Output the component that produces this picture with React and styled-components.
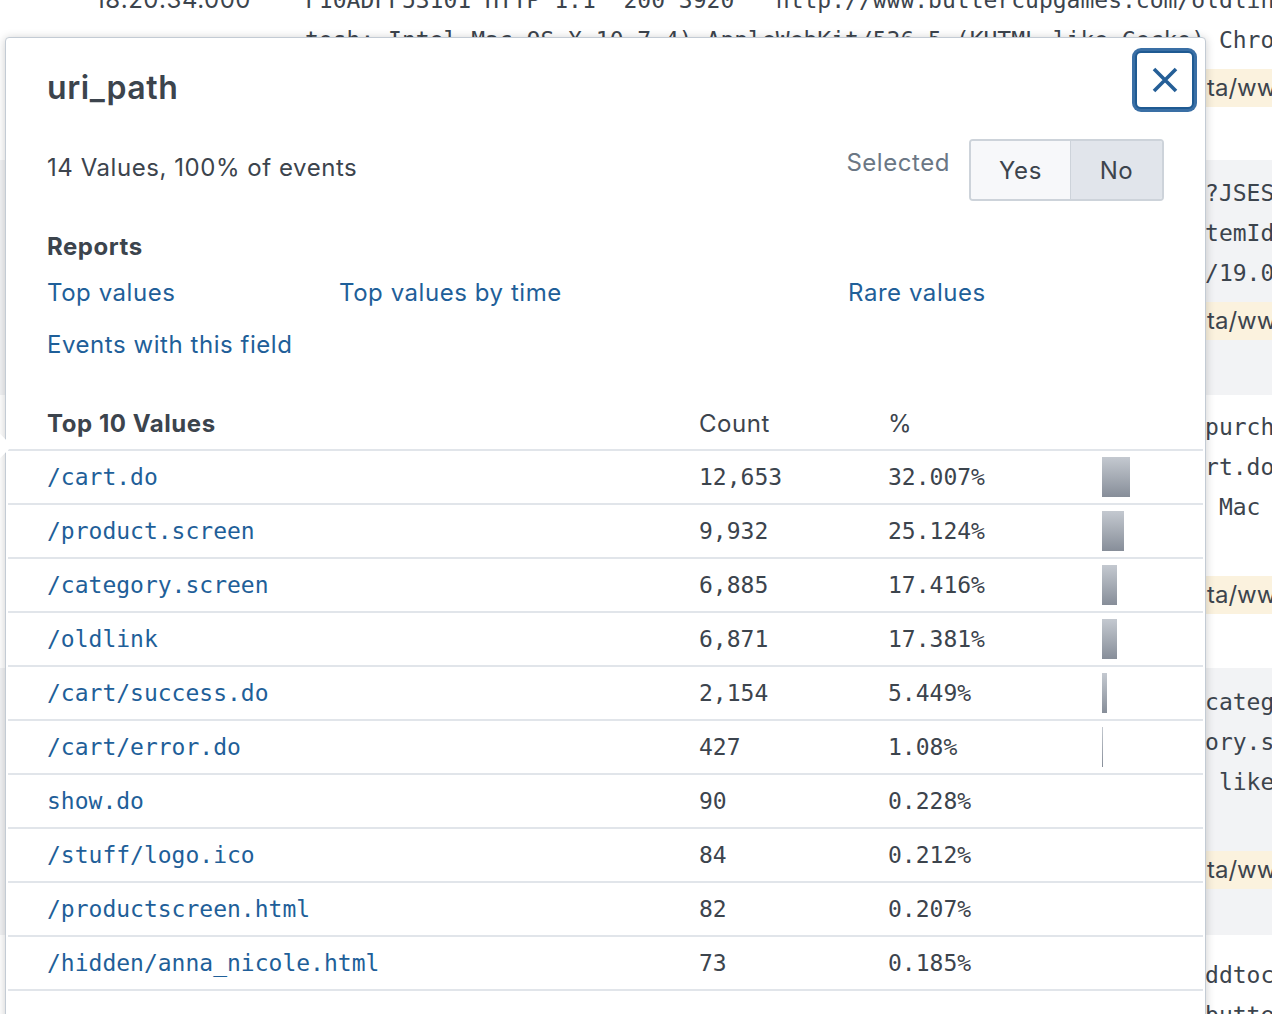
import React from 'react';
import styled, { createGlobalStyle } from 'styled-components';

const GlobalStyle = createGlobalStyle`
  *, *::before, *::after { box-sizing: border-box; }
  html, body { margin: 0; padding: 0; background: #ffffff; }
  body {
    font-family: Inter, Lato, "Open Sans", sans-serif;
    letter-spacing: 0.55px;
    color: #3c444d;
    overflow: hidden;
  }
`;

const fit = (head, tail, col = 65) => head.padEnd(col, ' ').slice(0, col) + tail;

const events = [
  {
    shaded: false, top: 13, bottom: 53, date: '9/14/18', time: '18:20:34.000',
    lines: [
      '91.214.92.22 - - [14/Sep/2018:18:20:34] "GET /oldlink?itemId=EST-18&JSESSIONID=SD5SL1FF',
      'F10ADFF53101 HTTP 1.1" 200 3920  "http://www.buttercupgames.com/oldlink?itemId=EST-18"',
      'tosh; Intel Mac OS X 10_7_4) AppleWebKit/536.5 (KHTML,like Gecko) Chrome/19.0.1084.46 Safari/536.5" 512',
    ],
  },
  {
    shaded: true, top: 13, bottom: 55, date: '9/14/18', time: '18:20:31.000',
    lines: [
      fit('91.205.189.15 - - [14/Sep/2018:18:20:31] "GET /oldlink?itemId=EST-14', '?JSESSIONID=SD6SL8FF10ADFF53101 HTTP 1.1"'),
      fit('200 1423 "http://www.buttercupgames.com/cart.do?action=addtocart&i', 'temId=EST-14" "Mozilla/5.0'),
      fit('(Windows NT 6.1; WOW64) AppleWebKit/536.5 (KHTML, like Gecko) Chrome', '/19.0.1084.46 Safari/536.5" 468'),
    ],
  },
  {
    shaded: false, top: 12, bottom: 54, date: '9/14/18', time: '18:20:28.000',
    lines: [
      fit('182.236.164.11 - - [14/Sep/2018:18:20:28] "POST /cart.do?action=', 'purchase&itemId=EST-15&JSESSIONID='),
      fit('SD9SL3FF2ADFF53102 HTTP 1.1" 200 2334 "http://www.buttercupgames.com/ca', 'rt.do?action=addtocart&itemId=EST-15"'),
      fit('"Mozilla/5.0 (Macintosh; Intel Mac OS X 10_7_4) AppleWebKit/536.5 Intel', ' Mac OS X 10_7_4)'),
      'Safari/536.5" 546',
    ],
  },
  {
    shaded: true, top: 14, bottom: 46, date: '9/14/18', time: '18:20:25.000',
    lines: [
      fit('27.175.11.11 - - [14/Sep/2018:18:20:25] "GET /category.screen?', 'categoryId=TEE&JSESSIONID=SD2SL7FF'),
      fit('HTTP 1.1" 200 2871 "http://www.buttercupgames.com/categ', 'ory.screen?categoryId=TEE"'),
      fit('"Mozilla/5.0 (Windows NT 6.1) AppleWebKit/536.5 (KHTML,', ' like Gecko) Chrome/19.0'),
      'Safari/536.5" 322',
    ],
  },
  {
    shaded: false, top: 20, bottom: 40, date: '9/14/18', time: '18:20:22.000',
    lines: [
      fit('211.166.11.101 - - [14/Sep/2018:18:20:22] "POST /cart.do?action=a', 'ddtocart&itemId=EST-7'),
      fit('&JSESSIONID=SD4SL10FF9ADFF53103 HTTP 1.1" 200 1128 "http://www.', 'buttercupgames.com/product.screen'),
    ],
  },
];

const topValues = [
  { value: '/cart.do', count: '12,653', pct: 32.007, label: '32.007%' },
  { value: '/product.screen', count: '9,932', pct: 25.124, label: '25.124%' },
  { value: '/category.screen', count: '6,885', pct: 17.416, label: '17.416%' },
  { value: '/oldlink', count: '6,871', pct: 17.381, label: '17.381%' },
  { value: '/cart/success.do', count: '2,154', pct: 5.449, label: '5.449%' },
  { value: '/cart/error.do', count: '427', pct: 1.08, label: '1.08%' },
  { value: 'show.do', count: '90', pct: 0.228, label: '0.228%' },
  { value: '/stuff/logo.ico', count: '84', pct: 0.212, label: '0.212%' },
  { value: '/productscreen.html', count: '82', pct: 0.207, label: '0.207%' },
  { value: '/hidden/anna_nicole.html', count: '73', pct: 0.185, label: '0.185%' },
];

const Page = styled.div`
  position: relative;
  width: 1272px;
  height: 1014px;
  overflow: hidden;
`;

const EventList = styled.div`
  margin-top: -73px;
`;

const EventRow = styled.div`
  display: grid;
  grid-template-columns: 305px 1fr;
  padding: ${(p) => p.$top}px 0 ${(p) => p.$bottom}px;
  background: ${(p) => (p.$shaded ? '#f2f3f5' : '#ffffff')};
`;

const TimeCell = styled.div`
  padding-left: 95px;
  font-size: 24px;
  line-height: 40px;
  color: #3c444d;
`;

const RawCell = styled.div`
  min-width: 0;
  overflow: hidden;
`;

const RawLine = styled.div`
  font-family: "DejaVu Sans Mono", "Liberation Mono", monospace;
  font-size: 23px;
  letter-spacing: 0;
  line-height: 40px;
  height: 40px;
  white-space: pre;
  color: #3c444d;
`;

const FieldLine = styled.div`
  margin-top: 9px;
  height: 38px;
  white-space: nowrap;
  overflow: hidden;
  background: #fbf2de;
  font-size: 24px;
  letter-spacing: 0;
  line-height: 38px;
  color: #3c444d;
`;

const FieldHead = styled.span`
  display: inline-block;
  vertical-align: top;
  width: 902px;
  overflow: hidden;
`;

const Popover = styled.div`
  position: absolute;
  left: 5px;
  top: 37px;
  width: 1201px;
  height: 1020px;
  background: #ffffff;
  border: 1px solid #c3cbd4;
  border-radius: 4px;
  box-shadow: 0 1px 10px rgba(0, 0, 0, 0.2);
`;

const Arrow = styled.div`
  position: absolute;
  left: -18px;
  top: 398px;
  width: 20px;
  height: 20px;
  background: #ffffff;
  border-left: 1px solid #c3cbd4;
  border-bottom: 1px solid #c3cbd4;
  transform: rotate(45deg);
`;

const CloseButton = styled.button`
  position: absolute;
  top: 13px;
  right: 11px;
  width: 59px;
  height: 58px;
  padding: 0;
  display: flex;
  align-items: center;
  justify-content: center;
  background: #ffffff;
  border: 2px solid #1f5a92;
  border-radius: 6px;
  box-shadow: 0 0 0 3px #3a6fa5;
  cursor: pointer;
`;

const Section = styled.div`
  padding: 0 41px;
`;

const Title = styled.h2`
  margin: 0;
  padding-top: 30px;
  font-size: 32px;
  line-height: 40px;
  font-weight: 600;
  letter-spacing: 0.6px;
  color: #3c444d;
`;

const SummaryRow = styled.div`
  margin-top: 31px;
  display: flex;
  align-items: center;
  justify-content: space-between;
`;

const Summary = styled.div`
  font-size: 24px;
  padding-bottom: 6px;
`;

const SelectGroup = styled.div`
  display: flex;
  align-items: center;
  gap: 19px;
`;

const SelectLabel = styled.span`
  font-size: 24px;
  color: #6b7785;
  padding-bottom: 16px;
`;

const Toggle = styled.div`
  display: flex;
  height: 62px;
  border: 2px solid #cdd3da;
  border-radius: 4px;
  overflow: hidden;
`;

const ToggleButton = styled.button`
  width: ${(p) => p.$width}px;
  border: none;
  border-left: ${(p) => (p.$first ? 'none' : '1px solid #cdd3da')};
  background: ${(p) => (p.$active ? '#e1e5eb' : '#f7f8fa')};
  font-family: inherit;
  font-size: 24px;
  letter-spacing: 0.55px;
  color: #3c444d;
  padding: 0;
`;

const Heading = styled.div`
  margin-top: 30px;
  font-size: 24px;
  line-height: 32px;
  font-weight: 700;
`;

const LinkGrid = styled.div`
  margin-top: 14px;
  display: grid;
  grid-template-columns: 292px 509px 1fr;
  row-gap: 20px;
`;

const ReportLink = styled.a`
  font-size: 24px;
  line-height: 32px;
  color: #1f5f99;
  text-decoration: none;
  cursor: pointer;
`;

const Table = styled.div`
  margin: 36px 2px 0;
`;

const Row = styled.div`
  display: grid;
  grid-template-columns: 691px 189px 214px 1fr;
  align-items: center;
  height: 54px;
  border-bottom: 2px solid #e1e5ea;
`;

const HeadCell = styled.div`
  font-size: 24px;
  font-weight: ${(p) => (p.$bold ? 700 : 400)};
  padding-left: ${(p) => (p.$first ? 39 : 0)}px;
`;

const Cell = styled.div`
  font-family: "DejaVu Sans Mono", "Liberation Mono", monospace;
  font-size: 23px;
  letter-spacing: 0;
  color: ${(p) => (p.$link ? '#1f5f99' : '#3c444d')};
  padding-left: ${(p) => (p.$first ? 39 : 0)}px;
  white-space: pre;
`;

const Bar = styled.div`
  height: 40px;
  background: linear-gradient(#c4c9d0, #878e99);
`;

function CloseIcon() {
  return (
    <svg width="26" height="26" viewBox="0 0 26 26">
      <path d="M2 2 L24 24 M24 2 L2 24" stroke="#255f97" strokeWidth="3.6" strokeLinecap="butt" />
    </svg>
  );
}

export default function App() {
  return (
    <Page>
      <GlobalStyle />
      <EventList>
        {events.map((ev, i) => (
          <EventRow key={i} $shaded={ev.shaded} $top={ev.top} $bottom={ev.bottom}>
            <TimeCell>
              <div>{ev.date}</div>
              <div>{ev.time}</div>
            </TimeCell>
            <RawCell>
              {ev.lines.map((line, j) => (
                <RawLine key={j}>{line}</RawLine>
              ))}
              <FieldLine>
                <FieldHead>host = www1 | source = /opt/log/tutorialda</FieldHead>
                ta/www1/access.log | sourcetype = access_combined_wcookie
              </FieldLine>
            </RawCell>
          </EventRow>
        ))}
      </EventList>

      <Popover>
        <Arrow />
        <CloseButton aria-label="Close">
          <CloseIcon />
        </CloseButton>
        <Section>
          <Title>uri_path</Title>
          <SummaryRow>
            <Summary>14 Values, 100% of events</Summary>
            <SelectGroup>
              <SelectLabel>Selected</SelectLabel>
              <Toggle>
                <ToggleButton $first $width={99}>Yes</ToggleButton>
                <ToggleButton $active $width={92}>No</ToggleButton>
              </Toggle>
            </SelectGroup>
          </SummaryRow>
          <Heading>Reports</Heading>
          <LinkGrid>
            <ReportLink>Top values</ReportLink>
            <ReportLink>Top values by time</ReportLink>
            <ReportLink>Rare values</ReportLink>
            <ReportLink>Events with this field</ReportLink>
          </LinkGrid>
        </Section>
        <Table>
          <Row>
            <HeadCell $first $bold>Top 10 Values</HeadCell>
            <HeadCell>Count</HeadCell>
            <HeadCell>%</HeadCell>
            <div />
          </Row>
          {topValues.map((r) => (
            <Row key={r.value}>
              <Cell $first $link>{r.value}</Cell>
              <Cell>{r.count}</Cell>
              <Cell>{r.label}</Cell>
              <div>
                <Bar style={{ width: `${Math.round(r.pct * 0.875)}px` }} />
              </div>
            </Row>
          ))}
        </Table>
      </Popover>
    </Page>
  );
}
